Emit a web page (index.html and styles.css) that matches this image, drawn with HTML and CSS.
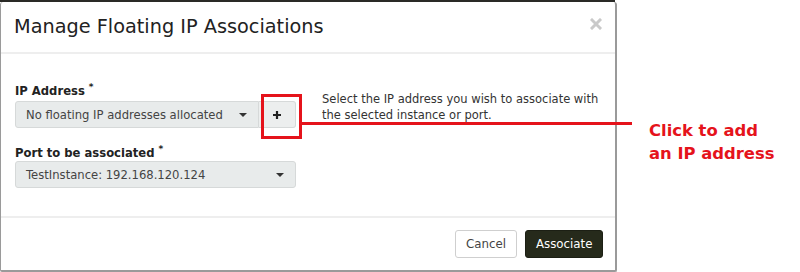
FILE: index.html
```html
<!DOCTYPE html>
<html>
<head>
<meta charset="utf-8">
<link rel="stylesheet" href="styles.css">
</head>
<body>
<div class="page">
  <div class="backdrop"></div>
  <div class="dialog">
    <div class="header">
      <h1 class="title">Manage Floating IP Associations</h1>
      <svg class="close" width="12" height="12" viewBox="0 0 12 12"><path d="M2 2 L10 10 M10 2 L2 10" stroke="#c9c9c9" stroke-width="3" stroke-linecap="square"/></svg>
    </div>
    <div class="body">
      <div class="fields">
        <div class="label">IP Address <span class="req">*</span></div>
        <div class="group">
          <div class="select short"><span>No floating IP addresses allocated</span><span class="caret"></span></div>
          <div class="addbtn">
            <svg width="10" height="10" viewBox="0 0 10 10"><path d="M5 1 V9 M1 5 H9" stroke="#222" stroke-width="2.2"/></svg>
          </div>
        </div>
        <div class="label second">Port to be associated <span class="req">*</span></div>
        <div class="select full"><span>TestInstance: 192.168.120.124</span><span class="caret"></span></div>
      </div>
      <p class="help">Select the IP address you wish to associate with the selected instance or port.</p>
    </div>
    <div class="footer">
      <button class="btn cancel">Cancel</button>
      <button class="btn primary">Associate</button>
    </div>
  </div>
  <div class="callout-box"></div>
  <div class="callout-line"></div>
  <div class="callout-text">Click to add<br>an IP address</div>
</div>
</body>
</html>
```
FILE: styles.css
```css
* { box-sizing: border-box; }
html, body { margin: 0; padding: 0; background: #fff; }
body { font-family: "DejaVu Sans", sans-serif; color: #333; }
.page { position: relative; width: 800px; height: 272px; overflow: hidden; }
.backdrop { height: 2px; width: 615px; background: #2a2a26; }
.dialog {
  width: 617px;
  height: 270px;
  border: 1px solid #9a9a9a;
  border-right-width: 2px;
  border-bottom-width: 2px;
  border-top: none;
  border-radius: 3px 3px 2px 2px;
  background: #fff;
  display: flex;
  flex-direction: column;
}
.header {
  height: 52px;
  border-bottom: 2px solid #eeeeee;
  display: flex;
  align-items: center;
  justify-content: space-between;
  padding: 0 13px 2px 13px;
}
.title { margin: 0; font-weight: normal; font-size: 19.3px; color: #222; letter-spacing: 0; }
.close { margin-right: 0; margin-top: -4px; }
.body {
  flex: 1;
  display: flex;
  padding: 24px 14px 0 14px;
  gap: 26px;
}
.fields { width: 281px; }
.label { font-size: 11.6px; font-weight: bold; color: #222; height: 18px; line-height: 18px; margin-bottom: 5px; }
.label.second { margin-top: 12px; margin-bottom: 3px; }
.req { font-size: 9px; vertical-align: 5px; }
.group { display: flex; }
.select {
  height: 27px;
  background: #e8ebeb;
  border: 1px solid #d6d9d9;
  border-radius: 3px;
  display: flex;
  align-items: center;
  justify-content: space-between;
  padding: 0 11px 0 10px;
  font-size: 11.6px;
  color: #444;
}
.select.short { width: 244px; border-radius: 3px 0 0 3px; }
.select.full { width: 281px; }
.caret { width: 0; height: 0; border-left: 4px solid transparent; border-right: 4px solid transparent; border-top: 4px solid #333; }
.addbtn {
  width: 37px;
  height: 27px;
  background: #eceeee;
  border: 1px solid #d6d9d9;
  border-left: none;
  border-radius: 0 3px 3px 0;
  display: flex;
  align-items: center;
  justify-content: center;
}
.help { margin: 13px 0 0 0; font-size: 11.5px; line-height: 16px; color: #333; width: 290px; }
.footer {
  height: 54px;
  border-top: 2px solid #eeeeee;
  display: flex;
  justify-content: flex-end;
  align-items: center;
  gap: 8px;
  padding: 0 12px 0 0;
}
.btn {
  height: 28px;
  border-radius: 3px;
  font-family: "DejaVu Sans", sans-serif;
  font-size: 11.8px;
  padding: 0 10px;
}
.cancel { background: #fff; border: 1px solid #cfcfcf; color: #444; width: 62px; }
.primary { background: #262a1b; border: 1px solid #1c1f14; color: #fff; width: 78px; }
.callout-box {
  position: absolute;
  left: 261px; top: 94px;
  width: 41px; height: 45px;
  border: 3px solid #e5131b;
}
.callout-line {
  position: absolute;
  left: 301px; top: 122px;
  width: 331px; height: 3px;
  background: #e5131b;
}
.callout-text {
  position: absolute;
  left: 649px; top: 119px;
  font-size: 16.4px;
  font-weight: bold;
  line-height: 23px;
  color: #e5131b;
}
```
